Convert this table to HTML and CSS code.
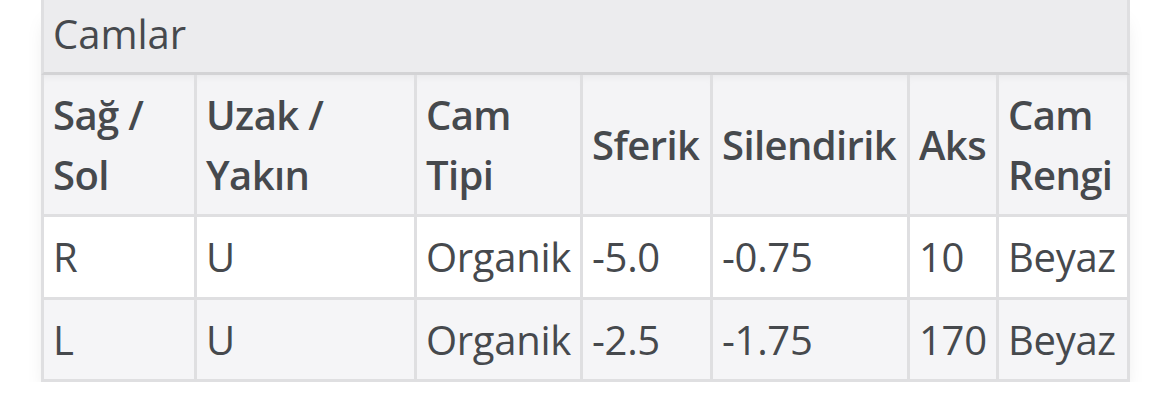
FILE: index.html
```html
<!DOCTYPE html>
<html lang="tr">
<head>
<meta charset="utf-8">
<title>Camlar</title>
<link rel="stylesheet" href="styles.css">
</head>
<body>
<div class="card">
  <table class="lens-table">
    <caption class="caption">Camlar</caption>
    <thead>
      <tr class="head-row">
        <th class="c1">Sağ / Sol</th>
        <th class="c2">Uzak / Yakın</th>
        <th class="c3">Cam Tipi</th>
        <th class="c4">Sferik</th>
        <th class="c5">Silendirik</th>
        <th class="c6">Aks</th>
        <th class="c7 last">Cam Rengi</th>
      </tr>
    </thead>
    <tbody>
      <tr class="row odd">
        <td>R</td>
        <td>U</td>
        <td>Organik</td>
        <td>-5.0</td>
        <td>-0.75</td>
        <td>10</td>
        <td class="last">Beyaz</td>
      </tr>
      <tr class="row even">
        <td>L</td>
        <td>U</td>
        <td>Organik</td>
        <td>-2.5</td>
        <td>-1.75</td>
        <td>170</td>
        <td class="last">Beyaz</td>
      </tr>
    </tbody>
  </table>
</div>
</body>
</html>
```

FILE: styles.css
```css
html, body {
  margin: 0;
  padding: 0;
  background: #ffffff;
}

body {
  font-family: "Open Sans", "Liberation Sans", sans-serif;
  font-size: 40px;
  line-height: 1.5;
  color: #46494d;
}

.card {
  margin-left: 41px;
  width: 1089px;
  box-shadow: 0 16px 20px -8px rgba(0, 0, 0, 0.15);
}

.lens-table {
  width: 1089px;
  table-layout: fixed;
  border-collapse: separate;
  border-spacing: 0;
}

.caption {
  caption-side: top;
  text-align: left;
  background: #ececee;
  border-left: 3px solid #dfdfe1;
  border-right: 3px solid #dfdfe1;
  border-bottom: 3px solid #d3d3d5;
  padding: 4px 9px 8px;
  font-weight: 400;
}

th, td {
  box-sizing: border-box;
  text-align: left;
  vertical-align: middle;
  padding: 10px 9px 10px;
  border-left: 3px solid #dfdfe1;
  border-bottom: 3px solid #dfdfe1;
  letter-spacing: -0.3px;
}

th {
  font-weight: 600;
  letter-spacing: -0.6px;
  color: #46494d;
  background: #f4f4f6;
  padding-bottom: 9px;
  box-shadow: inset 0 7px 8px -6px rgba(0, 0, 0, 0.06);
}

.last {
  border-right: 3px solid #dfdfe1;
}

.c1 { width: 153px; }
.c2 { width: 220px; }
.c3 { width: 166px; }
.c4 { width: 130px; }
.c5 { width: 197px; }
.c6 { width: 89px; }
.c7 { width: 134px; }

.odd td {
  background: #ffffff;
}

.even td {
  background: #f5f5f7;
  padding-bottom: 9px;
}
```
